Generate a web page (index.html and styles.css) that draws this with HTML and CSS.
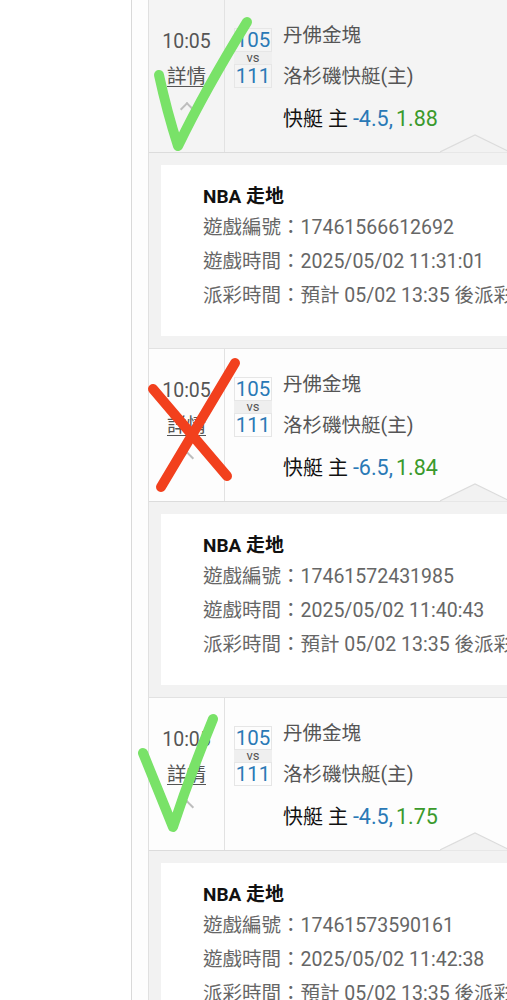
FILE: index.html
```html
<!DOCTYPE html>
<html lang="zh-Hant">
<head>
  <meta charset="UTF-8">
  <meta name="viewport" content="width=device-width, initial-scale=1.0">
  <title>注單</title>
  <link rel="stylesheet" href="styles.css">
</head>
<body>

<div class="page">
  <div class="list">

    <div class="bet bet-active">
      <div class="bet-head">
        <div class="bet-side">
          <div class="bet-time">10:05</div>
          <a class="bet-more" href="#">詳情</a>
          <div class="chevron"></div>
        </div>
        <div class="bet-main">
          <div class="match">
            <div class="score">
              <div class="score-num">105</div>
              <div class="score-vs">vs</div>
              <div class="score-num">111</div>
            </div>
            <div class="teams">
              <div class="team">丹佛金塊</div>
              <div class="team team-home">洛杉磯快艇(主)</div>
            </div>
          </div>
          <div class="pick">快艇 主 <span class="pick-line">-4.5,</span><span class="pick-odds">1.88</span></div>
        </div>
        <svg class="tail" width="70" height="19" viewBox="0 0 70 19">
          <polygon points="0,18.5 35,1 70,18.5" fill="#f2f2f2"/>
          <polyline points="0,18 35,1 70,18" fill="none" stroke="#dcdcdc" stroke-width="1.2"/>
        </svg>
      </div>
      <div class="bet-detail">
        <div class="detail-card">
          <div class="detail-title">NBA 走地</div>
          <div class="detail-row">遊戲編號：17461566612692</div>
          <div class="detail-row">遊戲時間：2025/05/02 11:31:01</div>
          <div class="detail-row">派彩時間：預計 05/02 13:35 後派彩</div>
        </div>
      </div>
    </div>

    <div class="bet">
      <div class="bet-head">
        <div class="bet-side">
          <div class="bet-time">10:05</div>
          <a class="bet-more" href="#">詳情</a>
          <div class="chevron"></div>
        </div>
        <div class="bet-main">
          <div class="match">
            <div class="score">
              <div class="score-num">105</div>
              <div class="score-vs">vs</div>
              <div class="score-num">111</div>
            </div>
            <div class="teams">
              <div class="team">丹佛金塊</div>
              <div class="team team-home">洛杉磯快艇(主)</div>
            </div>
          </div>
          <div class="pick">快艇 主 <span class="pick-line">-6.5,</span><span class="pick-odds">1.84</span></div>
        </div>
        <svg class="tail" width="70" height="19" viewBox="0 0 70 19">
          <polygon points="0,18.5 35,1 70,18.5" fill="#f2f2f2"/>
          <polyline points="0,18 35,1 70,18" fill="none" stroke="#dcdcdc" stroke-width="1.2"/>
        </svg>
      </div>
      <div class="bet-detail">
        <div class="detail-card">
          <div class="detail-title">NBA 走地</div>
          <div class="detail-row">遊戲編號：17461572431985</div>
          <div class="detail-row">遊戲時間：2025/05/02 11:40:43</div>
          <div class="detail-row">派彩時間：預計 05/02 13:35 後派彩</div>
        </div>
      </div>
    </div>

    <div class="bet">
      <div class="bet-head">
        <div class="bet-side">
          <div class="bet-time">10:05</div>
          <a class="bet-more" href="#">詳情</a>
          <div class="chevron"></div>
        </div>
        <div class="bet-main">
          <div class="match">
            <div class="score">
              <div class="score-num">105</div>
              <div class="score-vs">vs</div>
              <div class="score-num">111</div>
            </div>
            <div class="teams">
              <div class="team">丹佛金塊</div>
              <div class="team team-home">洛杉磯快艇(主)</div>
            </div>
          </div>
          <div class="pick">快艇 主 <span class="pick-line">-4.5,</span><span class="pick-odds">1.75</span></div>
        </div>
        <svg class="tail" width="70" height="19" viewBox="0 0 70 19">
          <polygon points="0,18.5 35,1 70,18.5" fill="#f2f2f2"/>
          <polyline points="0,18 35,1 70,18" fill="none" stroke="#dcdcdc" stroke-width="1.2"/>
        </svg>
      </div>
      <div class="bet-detail">
        <div class="detail-card">
          <div class="detail-title">NBA 走地</div>
          <div class="detail-row">遊戲編號：17461573590161</div>
          <div class="detail-row">遊戲時間：2025/05/02 11:42:38</div>
          <div class="detail-row">派彩時間：預計 05/02 13:35 後派彩</div>
        </div>
      </div>
    </div>

  </div>

  <!-- hand drawn marks on top of the screenshot -->
  <svg class="marks" width="507" height="1000" viewBox="0 0 507 1000">
    <path d="M159 75 Q167 112 178 146 Q205 90 247 22" fill="none" stroke="#79e268" stroke-width="10" stroke-linecap="round" stroke-linejoin="round"/>
    <path d="M235 363 L161 487" fill="none" stroke="#f2401d" stroke-width="10" stroke-linecap="round"/>
    <path d="M153 389 L227 476" fill="none" stroke="#f2401d" stroke-width="10" stroke-linecap="round"/>
    <path d="M143 753 Q158 790 173 827 Q190 775 213 719" fill="none" stroke="#79e268" stroke-width="10" stroke-linecap="round" stroke-linejoin="round"/>
  </svg>
</div>

</body>
</html>
```

FILE: styles.css
```css
body {
  margin: 0;
  overflow: hidden;
  background: #fff;
  font-family: Roboto, "Noto Sans CJK TC", sans-serif;
}
.page {
  position: relative;
  width: 507px;
  height: 1000px;
  overflow: hidden;
}
.list {
  margin-left: 131px;
  width: 460px;
  border-left: 1px solid #d9d9d9;
  padding-left: 16px;
  background: #fdfdfd;
  margin-top: -1px;
}
.bet {
  border-left: 1px solid #e0e0e0;
  border-top: 1px solid #e2e2e2;
}
.bet-head {
  position: relative;
  display: flex;
  height: 152px;
  background: #fdfdfd;
  border-bottom: 1px solid #dcdcdc;
}
.bet-active .bet-head {
  background: #f4f4f4;
}
.bet-side {
  width: 75px;
  border-right: 1px solid #e2e2e2;
  padding-top: 30px;
  text-align: center;
  color: #555;
}
.bet-time {
  font-size: 19.5px;
  line-height: 24px;
}
.bet-more {
  display: inline-block;
  margin-top: 11px;
  font-size: 19.5px;
  line-height: 24px;
  color: #555;
  text-decoration: underline;
  text-underline-offset: 3px;
}
.chevron {
  width: 8px;
  height: 8px;
  margin: 15px auto 0;
  border-left: 2px solid #bdbdbd;
  border-top: 2px solid #bdbdbd;
  transform: rotate(45deg);
}
.bet-main {
  flex: 1;
  padding-top: 24px;
  padding-left: 9px;
}
.match {
  display: flex;
  align-items: flex-start;
}
.score {
  width: 38px;
  margin-top: 4px;
  text-align: center;
}
.score-num {
  height: 22px;
  border: 1px solid #e6e6e6;
  font-size: 20.5px;
  line-height: 22px;
  color: #2a79b6;
}
.score-vs {
  height: 12px;
  background: #efefef;
  font-size: 13px;
  line-height: 12px;
  color: #555;
}
.teams {
  margin-left: 11px;
  color: #555;
  font-size: 19.5px;
  line-height: 24px;
}
.team-home {
  margin-top: 17px;
}
.pick {
  margin-top: 18px;
  margin-left: 49px;
  font-size: 20px;
  line-height: 24px;
  color: #111;
}
.pick-line {
  font-size: 21.5px;
  color: #2a79b6;
}
.pick-odds {
  margin-left: 3px;
  font-size: 21.5px;
  color: #3b9a2c;
}
.tail {
  position: absolute;
  left: 291px;
  bottom: -1px;
}
.bet-detail {
  background: #f2f2f2;
  padding: 12px 0 12px 12px;
}
.detail-card {
  height: 128px;
  padding: 20px 0 23px 42px;
  background: #fff;
  white-space: nowrap;
}
.detail-title {
  font-size: 19px;
  font-weight: bold;
  line-height: 24px;
  color: #111;
}
.detail-row {
  margin-top: 2px;
  font-size: 19.5px;
  line-height: 34px;
  color: #666;
}
.detail-row + .detail-row {
  margin-top: 0;
}
.marks {
  position: absolute;
  left: 0;
  top: 0;
  pointer-events: none;
}
```
